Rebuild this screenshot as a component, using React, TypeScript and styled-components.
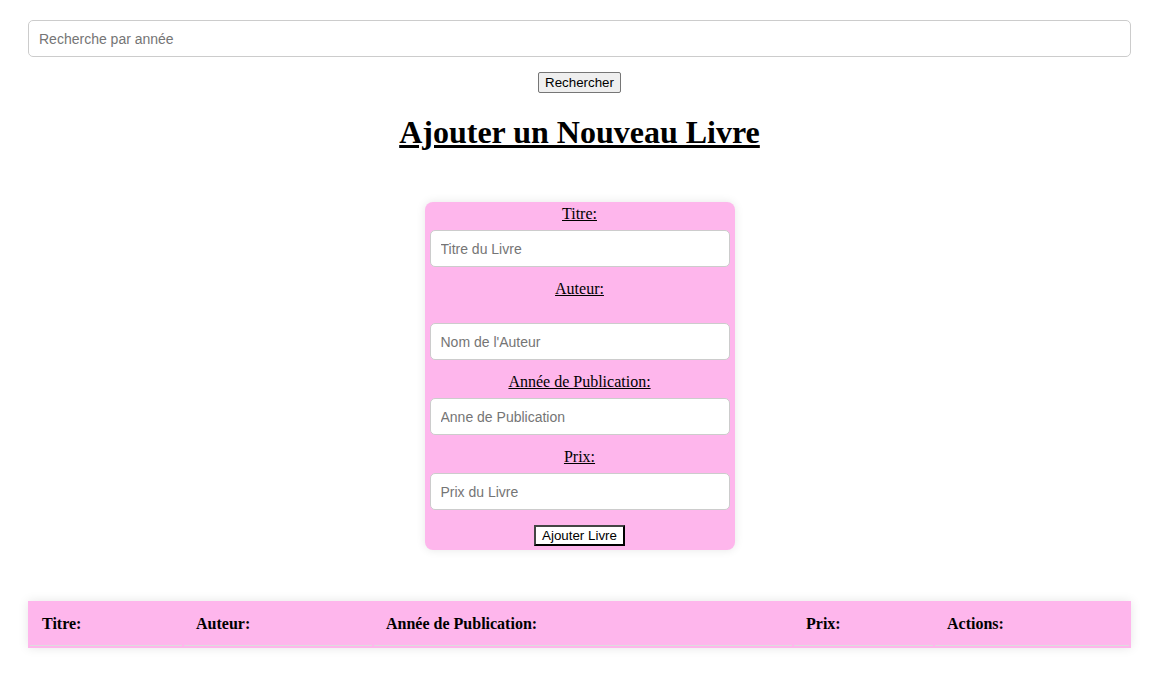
import React, { useState } from 'react';
import styled, { createGlobalStyle } from 'styled-components';

const GlobalStyle = createGlobalStyle`
  body {
    margin: 8px;
    background: #ffffff;
    font-family: "Liberation Serif", "Times New Roman", serif;
    color: #000;
  }
`;

const PINK = '#feb6ec';

const Page = styled.div`
  padding: 12px 21px 20px 20px;
`;

const SearchInput = styled.input`
  display: block;
  box-sizing: border-box;
  width: 100%;
  height: 37px;
  padding: 10px;
  border: 1px solid #cccccc;
  border-radius: 5px;
  font-family: "Liberation Sans", Arial, sans-serif;
  font-size: 14px;
  &::placeholder {
    color: #757575;
  }
`;

const Center = styled.div`
  text-align: center;
  margin-top: 15px;
`;

const SearchButton = styled.button`
  font-family: "Liberation Sans", Arial, sans-serif;
  font-size: 13.333px;
  height: 21px;
  padding: 1px 6px;
  background: #efefef;
  border: 1px solid #767676;
  border-radius: 2px;
  color: #000;
`;

const Title = styled.h1`
  font-size: 32px;
  font-weight: bold;
  text-align: center;
  text-decoration: underline;
  margin: 21px 0;
`;

const Form = styled.form`
  width: 310px;
  box-sizing: border-box;
  margin: 51px auto 0;
  padding: 3px 5px 4px;
  background: ${PINK};
  border-radius: 8px;
  box-shadow: 0 0 10px rgba(0, 0, 0, 0.1);
  text-align: center;
`;

const Label = styled.label<{ $extra?: boolean }>`
  display: block;
  font-size: 16px;
  line-height: 18px;
  text-decoration: underline;
  padding-bottom: ${(p) => (p.$extra ? '18px' : '0')};
`;

const Field = styled.input`
  display: block;
  box-sizing: border-box;
  width: 100%;
  height: 37px;
  margin: 7px 0 13px;
  padding: 10px;
  border: 1px solid #cccccc;
  border-radius: 5px;
  font-family: "Liberation Sans", Arial, sans-serif;
  font-size: 14px;
  &::placeholder {
    color: #757575;
  }
`;

const SubmitButton = styled.button`
  font-family: "Liberation Sans", Arial, sans-serif;
  font-size: 13.333px;
  height: 21px;
  padding: 0 6px;
  margin-top: 2px;
  background: #ffffff;
  color: #000;
  border: 2px solid;
  border-color: #444 #000 #000 #444;
`;

const Table = styled.table`
  width: 100%;
  margin-top: 51px;
  table-layout: fixed;
  border-spacing: 2px;
  background: ${PINK};
  box-shadow: 0 0 10px rgba(0, 0, 0, 0.1);
`;

const Th = styled.th<{ $w: number }>`
  width: ${(p) => p.$w}px;
  box-sizing: border-box;
  padding: 12px;
  text-align: left;
  font-size: 16px;
  font-weight: bold;
  line-height: 18px;
  border-bottom: 1px solid #dddddd;
`;

const columns = [
  { label: 'Titre:', w: 152 },
  { label: 'Auteur:', w: 188 },
  { label: 'Année de Publication:', w: 418 },
  { label: 'Prix:', w: 139 },
  { label: 'Actions:', w: 194 },
];

export default function App() {
  const [year, setYear] = useState('');

  return (
    <>
      <GlobalStyle />
      <Page>
        <SearchInput
          type="text"
          placeholder="Recherche par année"
          value={year}
          onChange={(e) => setYear(e.target.value)}
        />
        <Center>
          <SearchButton type="button">Rechercher</SearchButton>
        </Center>

        <Title>Ajouter un Nouveau Livre</Title>

        <Form onSubmit={(e) => e.preventDefault()}>
          <Label htmlFor="titre">Titre:</Label>
          <Field id="titre" placeholder="Titre du Livre" />
          <Label htmlFor="auteur" $extra>Auteur:</Label>
          <Field id="auteur" placeholder="Nom de l'Auteur" />
          <Label htmlFor="annee">Année de Publication:</Label>
          <Field id="annee" placeholder="Anne de Publication" />
          <Label htmlFor="prix">Prix:</Label>
          <Field id="prix" placeholder="Prix du Livre" />
          <SubmitButton type="submit">Ajouter Livre</SubmitButton>
        </Form>

        <Table>
          <thead>
            <tr>
              {columns.map((c) => (
                <Th key={c.label} $w={c.w}>{c.label}</Th>
              ))}
            </tr>
          </thead>
          <tbody></tbody>
        </Table>
      </Page>
    </>
  );
}
